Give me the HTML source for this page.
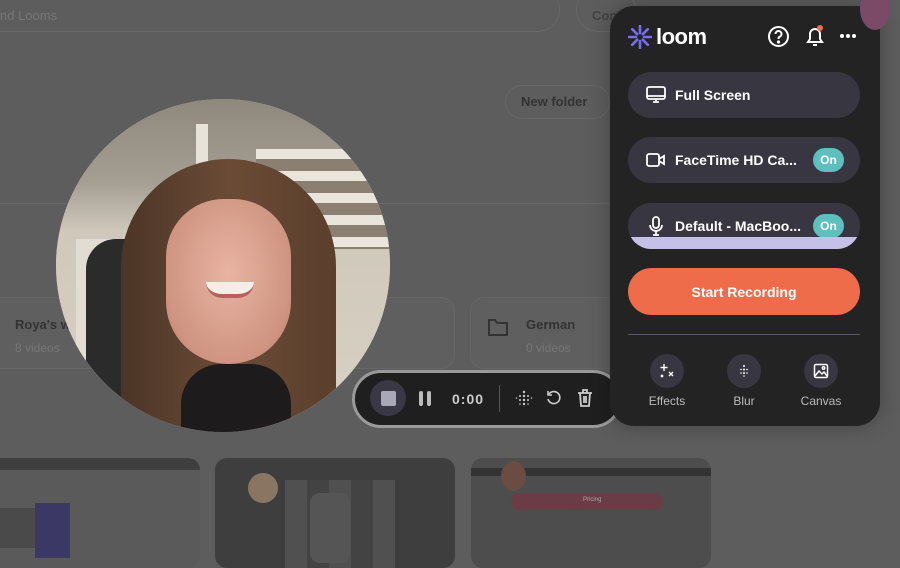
<!DOCTYPE html>
<html><head><meta charset="utf-8"><style>
*{margin:0;padding:0;box-sizing:border-box}
body{width:900px;height:562px;overflow:hidden;background:#5d5d5d;font-family:"Liberation Sans",sans-serif;position:relative}
.a{position:absolute}
.card{border:1px solid #666;border-radius:14px;background:#5f5f5f}
.pill{border-radius:24px;background:#383640;color:#fff;font-weight:bold;font-size:14px;display:flex;align-items:center;padding-left:18px}
.on{position:absolute;right:16px;top:50%;margin-top:-12px;width:31px;height:24px;border-radius:12px;background:#5fbfbf;color:#fff;font-size:12px;display:flex;align-items:center;justify-content:center}
.tool{position:absolute;width:34px;height:34px;border-radius:50%;background:#383640;display:flex;align-items:center;justify-content:center}
.tl{position:absolute;color:#bbb;font-size:12px;text-align:center;width:70px}
</style></head><body>
<div class="a" style="left:-20px;top:-12px;width:580px;height:44px;border:1px solid #686868;border-radius:22px"></div>
<div class="a" style="left:0;top:8px;color:#777;font-size:13px">nd Looms</div>
<div class="a" style="left:576px;top:-12px;width:60px;height:44px;border:1px solid #686868;border-radius:22px"></div>
<div class="a" style="left:592px;top:8px;color:#444;font-size:13px;font-weight:bold">Con</div>
<div class="a" style="left:505px;top:85px;width:105px;height:34px;border:1px solid #686868;border-radius:17px;color:#333;font-size:13px;font-weight:bold;padding:8px 0 0 15px">New folder</div>
<div class="a" style="left:0;top:203px;width:610px;height:1px;background:#666"></div>
<div class="a card" style="left:-20px;top:297px;width:220px;height:72px"></div>
<div class="a" style="left:15px;top:317px;color:#333;font-size:13px;font-weight:bold">Roya's w</div>
<div class="a" style="left:15px;top:341px;color:#777;font-size:12px">8 videos</div>
<div class="a card" style="left:235px;top:297px;width:220px;height:72px"></div>
<div class="a card" style="left:470px;top:297px;width:160px;height:72px"></div>
<svg class="a" style="left:487px;top:317px" width="22" height="20" viewBox="0 0 22 20"><path d="M2 3h6l2 3h10v12H2z" fill="none" stroke="#333" stroke-width="2"/></svg>
<div class="a" style="left:526px;top:317px;color:#333;font-size:13px;font-weight:bold">German</div>
<div class="a" style="left:526px;top:341px;color:#777;font-size:12px">0 videos</div>
<div class="a" style="left:-10px;top:458px;width:210px;height:110px;border-radius:12px;background:#5a5a5a;overflow:hidden"><div style="height:12px;background:#3e3e3e"></div><div class="a" style="left:45px;top:45px;width:35px;height:55px;background:#3b3866"></div><div class="a" style="left:5px;top:50px;width:40px;height:40px;background:#4a4a4a"></div></div>
<div class="a" style="left:215px;top:458px;width:240px;height:110px;border-radius:12px;background:#3e3e3e;overflow:hidden"><div class="a" style="left:70px;top:22px;width:110px;height:90px;background:repeating-linear-gradient(90deg,#505050 0 22px,#434343 22px 44px)"></div><div class="a" style="left:33px;top:15px;width:30px;height:30px;border-radius:50%;background:#8a7563"></div><div class="a" style="left:95px;top:35px;width:40px;height:70px;background:#555;border-radius:10px"></div></div>
<div class="a" style="left:471px;top:458px;width:240px;height:110px;border-radius:12px;background:#4d4d4d;overflow:hidden"><div class="a" style="left:0;top:10px;width:240px;height:8px;background:#333"></div><div class="a" style="left:40px;top:35px;width:85px;height:17px;border-radius:8px;background:#6a3c45"></div><div class="a" style="left:102px;top:35px;width:90px;height:17px;border-radius:8px;background:#6a3c45;color:#aaa;font-size:6px;padding:4px 10px">Pricing</div><div class="a" style="left:30px;top:3px;width:25px;height:30px;border-radius:50%;background:#6b4c42"></div></div>
<div class="a" style="left:56px;top:99px;width:334px;height:333px;border-radius:50%;overflow:hidden;background:#b7aea0">
 <div class="a" style="left:0;top:0;width:334px;height:333px;background:linear-gradient(180deg,#8f887d 0,#a59e92 25%,#cfc8bb 40%,#d9d2c4 100%)"></div>
 <div class="a" style="left:140px;top:25px;width:12px;height:190px;background:#e8e3d8"></div>
 <div class="a" style="left:200px;top:50px;width:134px;height:100px;background:repeating-linear-gradient(180deg,#eae5da 0 10px,#8a7f70 10px 22px)"></div>
 <div class="a" style="left:20px;top:140px;width:70px;height:200px;background:#e2ddd2"></div>
 <div class="a" style="left:30px;top:140px;width:100px;height:200px;border-radius:30px;background:#2b2b2b"></div>
 <div class="a" style="left:65px;top:60px;width:215px;height:290px;border-radius:110px 110px 40px 40px;background:linear-gradient(90deg,#4b3526,#6b4b36,#5a3f2c)"></div>
 <div class="a" style="left:110px;top:100px;width:125px;height:165px;border-radius:60px 60px 65px 65px;background:radial-gradient(ellipse at 50% 45%,#e9b4a2,#cf9482 70%,#b57a68)"></div>
 <div class="a" style="left:150px;top:183px;width:48px;height:16px;border-radius:0 0 24px 24px;background:#f2efe9;border-bottom:4px solid #b6625c"></div>
 <div class="a" style="left:125px;top:265px;width:110px;height:80px;background:#1d1b1c;border-radius:40px 40px 0 0"></div>
</div>
<div class="a" style="left:352px;top:370px;width:270px;height:58px;border-radius:29px;background:#1f1f1f;border:3px solid #9a9a9a"></div>
<div class="a" style="left:370px;top:380px;width:36px;height:36px;border-radius:50%;background:#3a3845"></div>
<div class="a" style="left:381px;top:391px;width:15px;height:15px;border-radius:2px;background:#a9a8b6"></div>
<div class="a" style="left:419px;top:391px;width:4px;height:15px;border-radius:2px;background:#bbb"></div>
<div class="a" style="left:427px;top:391px;width:4px;height:15px;border-radius:2px;background:#bbb"></div>
<div class="a" style="left:452px;top:391px;color:#ccc;font-size:14px;font-weight:bold;letter-spacing:1px">0:00</div>
<div class="a" style="left:499px;top:385px;width:1px;height:27px;background:#555"></div>
<svg class="a" style="left:515px;top:390px" width="18" height="18" viewBox="0 0 18 18" fill="#ccc"><circle cx="9" cy="2" r="1.2"/><circle cx="9" cy="6" r="1.2"/><circle cx="9" cy="10" r="1.2"/><circle cx="9" cy="14" r="1.2"/><circle cx="5" cy="6" r="1"/><circle cx="5" cy="10" r="1"/><circle cx="13" cy="6" r="1"/><circle cx="13" cy="10" r="1"/><circle cx="1.5" cy="8" r=".8"/><circle cx="16.5" cy="8" r=".8"/><circle cx="5" cy="14" r=".8"/><circle cx="13" cy="14" r=".8"/></svg>
<svg class="a" style="left:545px;top:389px" width="18" height="18" viewBox="0 0 18 18" fill="none" stroke="#ccc" stroke-width="1.6"><path d="M4 5a6 6 0 1 1-1 5"/><path d="M3 2v4h4"/></svg>
<svg class="a" style="left:576px;top:388px" width="18" height="20" viewBox="0 0 18 20" fill="none" stroke="#ccc" stroke-width="1.8"><path d="M2 5h14M7 5V2h4v3M4 5l1 13h8l1-13M8 8v7M10 8v7"/></svg>
<div class="a" style="left:610px;top:6px;width:270px;height:420px;border-radius:24px;background:#232323;box-shadow:0 0 20px rgba(0,0,0,.3)"></div>
<svg class="a" style="left:628px;top:25px" width="24" height="24" viewBox="0 0 24 24" stroke="#7a6cf0" stroke-width="2.6" stroke-linecap="round"><path d="M12 1v7M12 16v7M1 12h7M16 12h7M4.2 4.2l5 5M14.8 14.8l5 5M19.8 4.2l-5 5M9.2 14.8l-5 5"/></svg>
<div class="a" style="left:656px;top:24px;color:#fff;font-size:22px;font-weight:bold;letter-spacing:-0.5px">loom</div>
<svg class="a" style="left:767px;top:25px" width="23" height="23" viewBox="0 0 23 23" fill="none" stroke="#fff" stroke-width="2"><circle cx="11.5" cy="11.5" r="9.5"/><path d="M8.5 9a3 3 0 1 1 4 2.8c-1 .4-1 1-1 2.2"/><circle cx="11.5" cy="17" r=".6" fill="#fff"/></svg>
<svg class="a" style="left:804px;top:24px" width="22" height="24" viewBox="0 0 22 24" fill="none" stroke="#fff" stroke-width="2"><path d="M4 18h14l-2-3V10a5 5 0 0 0-10 0v5z"/><path d="M9 21h4"/><circle cx="16" cy="4" r="3" fill="#f06d4a" stroke="none"/></svg>
<div class="a" style="left:840px;top:34px;width:4px;height:4px;border-radius:50%;background:#fff;box-shadow:6px 0 #fff,12px 0 #fff"></div>
<div class="a pill" style="left:628px;top:72px;width:232px;height:46px"><svg width="20" height="18" viewBox="0 0 20 18" fill="none" stroke="#fff" stroke-width="1.8"><rect x="1" y="1" width="18" height="12" rx="2"/><path d="M1 10h18M7 16h6M10 13v3"/></svg><span style="margin-left:9px">Full Screen</span></div>
<div class="a pill" style="left:628px;top:137px;width:232px;height:46px"><svg width="20" height="16" viewBox="0 0 20 16" fill="none" stroke="#fff" stroke-width="1.8"><rect x="1" y="2" width="12" height="12" rx="2"/><path d="M13 7l5-3v8l-5-3"/></svg><span style="margin-left:9px">FaceTime HD Ca...</span><div class="on">On</div></div>
<div class="a pill" style="left:628px;top:203px;width:232px;height:46px;overflow:hidden"><svg width="20" height="20" viewBox="0 0 20 20" fill="none" stroke="#fff" stroke-width="1.8"><rect x="7" y="1" width="6" height="11" rx="3"/><path d="M4 9a6 6 0 0 0 12 0M10 15v4M7 19h6"/></svg><span style="margin-left:9px">Default - MacBoo...</span><div class="on">On</div><div class="a" style="left:0;bottom:0;width:232px;height:12px;background:#c4c0e8"></div></div>
<div class="a" style="left:628px;top:268px;width:232px;height:47px;border-radius:24px;background:#ef6c4b;color:#fff;font-weight:bold;font-size:14px;display:flex;align-items:center;justify-content:center">Start Recording</div>
<div class="a" style="left:628px;top:334px;width:232px;height:1px;background:#5a5670"></div>
<div class="tool" style="left:650px;top:354px"><svg width="16" height="16" viewBox="0 0 16 16" stroke="#fff" stroke-width="1.4"><path d="M5 1v7M1.5 4.5h7M10 9l4 4M14 9l-4 4M2 12l2 2M4 12l-2 2"/></svg></div>
<div class="tool" style="left:727px;top:354px"><svg width="12" height="12" viewBox="0 0 12 12" fill="#fff"><circle cx="6" cy="1" r="1"/><circle cx="6" cy="4.5" r="1"/><circle cx="6" cy="8" r="1"/><circle cx="6" cy="11" r=".8"/><circle cx="3" cy="4.5" r=".8"/><circle cx="3" cy="8" r=".8"/><circle cx="9" cy="4.5" r=".8"/><circle cx="9" cy="8" r=".8"/></svg></div>
<div class="tool" style="left:804px;top:354px"><svg width="16" height="16" viewBox="0 0 16 16" fill="none" stroke="#fff" stroke-width="1.5"><rect x="1.5" y="1.5" width="13" height="13" rx="1.5"/><path d="M2 13l4-5 3 3 2-2 3 4"/><circle cx="10.5" cy="5" r="1.2"/></svg></div>
<div class="tl" style="left:632px;top:394px">Effects</div>
<div class="tl" style="left:709px;top:394px">Blur</div>
<div class="tl" style="left:786px;top:394px">Canvas</div>
<div class="a" style="left:860px;top:-12px;width:30px;height:42px;border-radius:50%;background:#7a4a66"></div>
</body></html>
